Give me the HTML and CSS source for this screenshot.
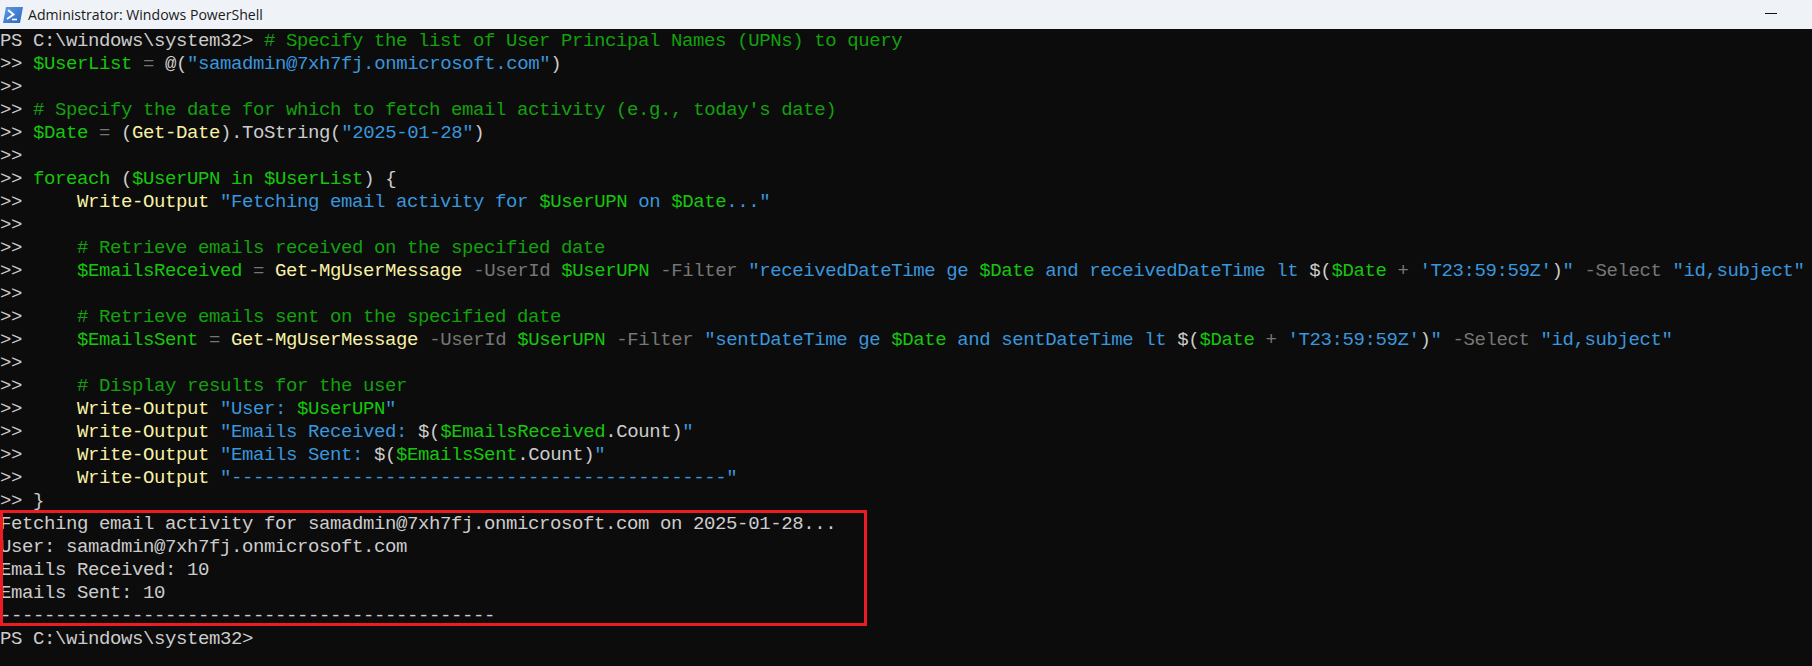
FILE: index.html
```html
<!DOCTYPE html>
<html lang="en">
<head>
<meta charset="utf-8">
<title>Administrator: Windows PowerShell</title>
<link rel="stylesheet" href="styles.css">
</head>
<body>
<div class="window">
<header class="titlebar">
<svg class="ps-icon" viewBox="0 0 20 16" aria-hidden="true"><defs><linearGradient id="psg" x1="0" y1="0" x2="1" y2="1"><stop offset="0" stop-color="#5f9ae6"/><stop offset="1" stop-color="#2a68c0"/></linearGradient></defs><path d="M3 0H20L17 16H0Z" fill="url(#psg)"/><path d="M5 3L10.5 7.5L4 12" fill="none" stroke="#fff" stroke-width="2"/><path d="M9 12.5H14" stroke="#fff" stroke-width="1.6"/></svg>
<span class="title">Administrator: Windows PowerShell</span>
<span class="minimize"></span>
</header>
<main class="console">
<div class="line">PS C:\windows\system32&gt; <span class="c"># Specify the list of User Principal Names (UPNs) to query</span></div>
<div class="line">&gt;&gt; <span class="v">$UserList</span> <span class="o">=</span> @(<span class="s">"samadmin@7xh7fj.onmicrosoft.com"</span>)</div>
<div class="line">&gt;&gt;</div>
<div class="line">&gt;&gt; <span class="c"># Specify the date for which to fetch email activity (e.g., today's date)</span></div>
<div class="line">&gt;&gt; <span class="v">$Date</span> <span class="o">=</span> (<span class="y">Get-Date</span>).ToString(<span class="s">"2025-01-28"</span>)</div>
<div class="line">&gt;&gt;</div>
<div class="line">&gt;&gt; <span class="v">foreach</span> (<span class="v">$UserUPN</span> <span class="v">in</span> <span class="v">$UserList</span>) {</div>
<div class="line">&gt;&gt;     <span class="y">Write-Output</span> <span class="s">"Fetching email activity for </span><span class="v">$UserUPN</span><span class="s"> on </span><span class="v">$Date</span><span class="s">..."</span></div>
<div class="line">&gt;&gt;</div>
<div class="line">&gt;&gt;     <span class="c"># Retrieve emails received on the specified date</span></div>
<div class="line">&gt;&gt;     <span class="v">$EmailsReceived</span> <span class="o">=</span> <span class="y">Get-MgUserMessage</span> <span class="o">-UserId</span> <span class="v">$UserUPN</span> <span class="o">-Filter</span> <span class="s">"receivedDateTime ge </span><span class="v">$Date</span><span class="s"> and receivedDateTime lt </span>$(<span class="v">$Date</span> <span class="o">+</span> <span class="s">'T23:59:59Z'</span>)<span class="s">"</span> <span class="o">-Select</span> <span class="s">"id,subject"</span></div>
<div class="line">&gt;&gt;</div>
<div class="line">&gt;&gt;     <span class="c"># Retrieve emails sent on the specified date</span></div>
<div class="line">&gt;&gt;     <span class="v">$EmailsSent</span> <span class="o">=</span> <span class="y">Get-MgUserMessage</span> <span class="o">-UserId</span> <span class="v">$UserUPN</span> <span class="o">-Filter</span> <span class="s">"sentDateTime ge </span><span class="v">$Date</span><span class="s"> and sentDateTime lt </span>$(<span class="v">$Date</span> <span class="o">+</span> <span class="s">'T23:59:59Z'</span>)<span class="s">"</span> <span class="o">-Select</span> <span class="s">"id,subject"</span></div>
<div class="line">&gt;&gt;</div>
<div class="line">&gt;&gt;     <span class="c"># Display results for the user</span></div>
<div class="line">&gt;&gt;     <span class="y">Write-Output</span> <span class="s">"User: </span><span class="v">$UserUPN</span><span class="s">"</span></div>
<div class="line">&gt;&gt;     <span class="y">Write-Output</span> <span class="s">"Emails Received: </span>$(<span class="v">$EmailsReceived</span>.Count)<span class="s">"</span></div>
<div class="line">&gt;&gt;     <span class="y">Write-Output</span> <span class="s">"Emails Sent: </span>$(<span class="v">$EmailsSent</span>.Count)<span class="s">"</span></div>
<div class="line">&gt;&gt;     <span class="y">Write-Output</span> <span class="s">"---------------------------------------------"</span></div>
<div class="line">&gt;&gt; }</div>
<div class="output">
<div class="highlight"></div>
<div class="line">Fetching email activity for samadmin@7xh7fj.onmicrosoft.com on 2025-01-28...</div>
<div class="line">User: samadmin@7xh7fj.onmicrosoft.com</div>
<div class="line">Emails Received: 10</div>
<div class="line">Emails Sent: 10</div>
<div class="line">---------------------------------------------</div>
</div>
<div class="line">PS C:\windows\system32&gt;</div>
</main>
</div>
</body>
</html>
```

FILE: styles.css
```css
html, body {
  margin: 0;
  padding: 0;
  height: 100%;
  overflow: hidden;
}
.window {
  display: flex;
  flex-direction: column;
  height: 666px;
  background: #0c0c0c;
}
.titlebar {
  flex: 0 0 29px;
  display: flex;
  align-items: center;
  background: #eff3f7;
  padding: 0 35px 0 3px;
  font: 14.1px "Open Sans", "Noto Sans", sans-serif;
  color: #1a1a1a;
}
.ps-icon {
  width: 20px;
  height: 16px;
  margin-right: 5px;
}
.title {
  flex: 1;
}
.minimize {
  width: 12px;
  height: 1px;
  background: #111;
  margin-top: -3px;
}
.console {
  flex: 1;
  padding-top: 1px;
  font: 19px/23px "Liberation Mono", monospace;
  letter-spacing: -0.4px;
  color: #cccccc;
}
.line {
  height: 23px;
  white-space: pre;
}
.output {
  position: relative;
}
.highlight {
  position: absolute;
  left: 0;
  top: -3px;
  width: 861px;
  height: 110px;
  border: 3px solid #ed1c24;
}
.c { color: #13a10e; }
.v { color: #16c60c; }
.s { color: #3a96dd; }
.y { color: #f9f1a5; }
.o { color: #767676; }
```
